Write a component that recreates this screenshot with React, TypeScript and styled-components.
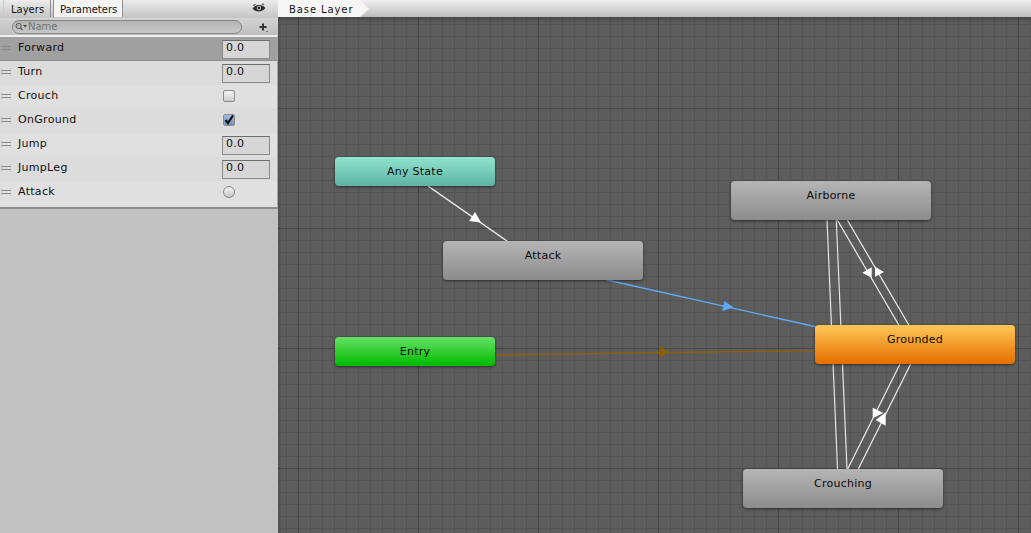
import React from "react";
import styled, { createGlobalStyle } from "styled-components";

const Global = createGlobalStyle`
  html, body { margin: 0; padding: 0; height: 100%; overflow: hidden; background: #c2c2c2; }
  #root { height: 100%; }
  * { box-sizing: border-box; }
`;

const Page = styled.div`
  display: flex;
  width: 1031px;
  height: 533px;
  font-family: "DejaVu Sans", sans-serif;
  font-size: 11px;
  color: #111;
`;

const Sidebar = styled.aside`
  width: 278px;
  flex: none;
  background: #c2c2c2;
  display: flex;
  flex-direction: column;
`;

const TabBar = styled.div`
  height: 18px;
  display: flex;
  align-items: stretch;
  padding-left: 3px;
  background: linear-gradient(#ececec, #c4c4c4);
  position: relative;
`;

const Tab = styled.div<{ $active?: boolean }>`
  width: ${(p) => (p.$active ? "70px" : "48px")};
  padding: 4px 0 0 ${(p) => (p.$active ? "6px" : "7px")};
  height: 17px;
  font-size: 10px;
  line-height: 12px;
  margin-right: ${(p) => (p.$active ? "0" : "2px")};
  border-left: 1px solid ${(p) => (p.$active ? "#8e8e8e" : "#c8c8c8")};
  border-right: 1px solid #8e8e8e;
  background: ${(p) => (p.$active ? "#f4f4f4" : "transparent")};
`;

const EyeSlot = styled.div`
  position: absolute;
  left: 252px;
  top: 3px;
  width: 14px;
  height: 11px;
  display: flex;
`;

const Toolbar = styled.div`
  height: 17px;
  display: flex;
  align-items: center;
  padding: 0 8px 0 12px;
  gap: 16px;
  background: linear-gradient(#d4d4d4, #bebebe);
`;

const SearchField = styled.div`
  width: 230px;
  height: 14px;
  border: 1px solid #858585;
  border-radius: 7px;
  display: flex;
  align-items: center;
  padding-left: 2px;
  background: linear-gradient(#b4b4b4, #c8c8c8);
  color: #707070;
  font-size: 10px;
`;

const PlusButton = styled.div`
  width: 10px;
  height: 10px;
  display: flex;
`;

const List = styled.div`
  border-top: 2px solid #efefef;
  border-bottom: 2px solid #8c8c8c;
  border-right: 1px solid #a8a8a8;
  padding-bottom: 2px;
  background: #e0e0e0;
  display: flex;
  flex-direction: column;
`;

const Row = styled.div<{ $tone: string; $selected?: boolean }>`
  height: 24px;
  display: flex;
  align-items: center;
  background: ${(p) => p.$tone};
  box-shadow: ${(p) => (p.$selected ? "inset 0 -1px 0 #8f8f8f" : "none")};
`;

const Handle = styled.div`
  width: 10px;
  margin-left: 1px;
  margin-bottom: 3px;
  height: 4px;
  flex: none;
  border-top: 1px solid #8a8a8a;
  border-bottom: 1px solid #8a8a8a;
`;

const RowName = styled.div`
  margin-left: 7px;
  width: 204px;
  flex: none;
  padding-bottom: 4px;
  letter-spacing: 0.3px;
`;

const NumberField = styled.div`
  width: 48px;
  height: 19px;
  padding-left: 3px;
  line-height: 13px;
  border: 1px solid #8b8b8b;
  border-top-color: #6f6f6f;
  background: #d6d6d6;
  letter-spacing: 0.2px;
`;

const CheckBox = styled.div<{ $checked?: boolean }>`
  width: 12px;
  height: 12px;
  margin-left: 1px;
  margin-bottom: 2px;
  border: 1px solid #8a8a8a;
  border-radius: 2px;
  background: ${(p) => (p.$checked ? "linear-gradient(#a3bddf, #6f92c3)" : "linear-gradient(#f4f4f4, #cdcdcd)")};
  display: flex;
`;

const RadioBall = styled.div`
  width: 12px;
  height: 12px;
  margin-left: 1px;
  margin-bottom: 2px;
  border: 1px solid #858585;
  border-radius: 50%;
  background: linear-gradient(#f7f7f7, #c6c6c6);
`;

const Main = styled.main`
  flex: 1;
  display: flex;
  flex-direction: column;
  min-width: 0;
`;

const Breadcrumb = styled.div`
  height: 17px;
  flex: none;
  background: linear-gradient(#f0f0f0, #bdbdbd);
`;

const Crumb = styled.div`
  width: 91px;
  height: 17px;
  padding: 3px 0 0 11px;
  line-height: 13px;
  font-size: 10px;
  letter-spacing: 0.9px;
  background: #f6f6f6;
  clip-path: polygon(0 0, 82px 0, 91px 9px, 82px 17px, 0 17px);
`;

const Canvas = styled.div`
  flex: 1;
  position: relative;
  overflow: hidden;
  background-color: #5d5d5d;
  background-image:
    linear-gradient(to right, #454545 1px, transparent 1px),
    linear-gradient(to bottom, #454545 1px, transparent 1px),
    linear-gradient(to right, #545454 1px, transparent 1px),
    linear-gradient(to bottom, #545454 1px, transparent 1px);
  background-size: 120px 120px, 120px 120px, 12px 12px, 12px 12px;
  background-position: 20px 91px, 20px 91px, 8px 7px, 8px 7px;
  &::after {
    content: "";
    position: absolute;
    inset: 0;
    pointer-events: none;
    box-shadow: inset 3px 5px 5px -3px rgba(0, 0, 0, 0.28);
  }
`;

const Edges = styled.svg`
  position: absolute;
  left: 0;
  top: 0;
`;

const tones = {
  gray: ["#b5b5b5", "#8c8c8c"],
  teal: ["#90e4ce", "#5eb3a3"],
  green: ["#66e266", "#00b900"],
  orange: ["#ffc857", "#e56e00"],
} as const;

const Node = styled.div<{ $x: number; $y: number; $w: number; $h: number; $tone: keyof typeof tones }>`
  position: absolute;
  left: ${(p) => p.$x}px;
  top: ${(p) => p.$y}px;
  width: ${(p) => p.$w}px;
  height: ${(p) => p.$h}px;
  padding-top: 8px;
  border-radius: 4px;
  text-align: center;
  line-height: 14px;
  letter-spacing: 0.25px;
  color: #0c0c0c;
  background: linear-gradient(${(p) => tones[p.$tone][0]}, ${(p) => tones[p.$tone][1]});
  box-shadow: 0 1px 3px rgba(0, 0, 0, 0.55);
`;

const OX = 278;
const OY = 17;

type Seg = [number, number, number, number];

const under: { c: string; w: number; s: Seg }[] = [
  { c: "#e4e4e4", w: 1.2, s: [827, 220, 837.5, 469] },
  { c: "#e4e4e4", w: 1.2, s: [836.3, 220, 847, 469] },
  { c: "#f0f0f0", w: 1.2, s: [837.3, 220, 900, 327] },
  { c: "#f0f0f0", w: 1.2, s: [847.3, 220, 910, 327] },
  { c: "#f0f0f0", w: 1.2, s: [900, 364, 847.7, 469] },
  { c: "#f0f0f0", w: 1.2, s: [910.7, 364, 858.3, 469] },
  { c: "#f4f4f4", w: 1.5, s: [428, 186, 507, 241] },
  { c: "#5fa8f5", w: 1.4, s: [607, 280, 817, 327] },
  { c: "#8b5e0a", w: 1.5, s: [495, 355, 817, 350.5] },
];

const heads: { c: string; p: number[] }[] = [
  { c: "#ffffff", p: [475, 212, 469, 221, 481, 222.5] },
  { c: "#5fa8f5", p: [724.5, 301, 722, 311, 733.5, 307.5] },
  { c: "#8b5e0a", p: [660, 347, 660, 357, 670, 352] },
  { c: "#ffffff", p: [862.3, 272.7, 871.7, 267.3, 871.7, 277.7] },
  { c: "#ffffff", p: [884, 272, 875, 266.7, 875, 276.7] },
  { c: "#ffffff", p: [872.7, 407.7, 872.7, 418.3, 883.3, 413] },
  { c: "#ffffff", p: [885.7, 412.3, 885.7, 425.7, 875.7, 420] },
];

const params = [
  { name: "Forward", kind: "float", tone: "#a0a0a0" },
  { name: "Turn", kind: "float", tone: "#dcdcdc" },
  { name: "Crouch", kind: "off", tone: "#e0e0e0" },
  { name: "OnGround", kind: "on", tone: "#dcdcdc" },
  { name: "Jump", kind: "float", tone: "#e0e0e0" },
  { name: "JumpLeg", kind: "float", tone: "#dcdcdc" },
  { name: "Attack", kind: "trigger", tone: "#e0e0e0" },
];

const nodes = [
  { label: "Any State", x: 335, y: 157, w: 160, h: 29, tone: "teal" },
  { label: "Attack", x: 443, y: 241, w: 200, h: 39, tone: "gray" },
  { label: "Airborne", x: 731, y: 181, w: 200, h: 39, tone: "gray" },
  { label: "Grounded", x: 815, y: 325, w: 200, h: 39, tone: "orange" },
  { label: "Crouching", x: 743, y: 469, w: 200, h: 39, tone: "gray" },
  { label: "Entry", x: 335, y: 337, w: 160, h: 29, tone: "green" },
] as const;

export default function App() {
  return (
    <Page>
      <Global />
      <Sidebar>
        <TabBar>
          <Tab>Layers</Tab>
          <Tab $active>Parameters</Tab>
          <EyeSlot>
            <svg width="14" height="11" viewBox="0 0 14 11">
              <path d="M0.5 5.5 C3 1.5 10 0.5 13.5 5 C10 9.5 3.5 9.5 0.5 5.5Z" fill="#2a2a2a" />
              <path d="M1 2.5 L3.5 1.5 M12 1.5 L10 1" stroke="#333" strokeWidth="1" />
              <circle cx="7" cy="5" r="2.2" fill="#c9c9c9" />
              <circle cx="7" cy="5" r="1.2" fill="#111" />
            </svg>
          </EyeSlot>
        </TabBar>
        <Toolbar>
          <SearchField>
            <svg width="13" height="10" viewBox="0 0 13 10">
              <circle cx="3.6" cy="4" r="2.6" fill="none" stroke="#555" strokeWidth="1" />
              <path d="M5.5 6 L7.5 8" stroke="#555" strokeWidth="1.2" />
              <path d="M8 3 H12 L10 5.5Z" fill="#444" />
            </svg>
            Name
          </SearchField>
          <PlusButton>
            <svg width="10" height="10" viewBox="0 0 10 10">
              <path d="M4 1.5 H6 V4 H8.5 V6 H6 V8.5 H4 V6 H1.5 V4 H4Z" fill="#333" />
              <path d="M8 9.5 H10" stroke="#777" strokeWidth="1" />
            </svg>
          </PlusButton>
        </Toolbar>
        <List>
          {params.map((p, i) => (
            <Row key={p.name} $tone={p.tone} $selected={i === 0}>
              <Handle />
              <RowName>{p.name}</RowName>
              {p.kind === "float" && <NumberField>0.0</NumberField>}
              {p.kind === "off" && <CheckBox />}
              {p.kind === "on" && (
                <CheckBox $checked>
                  <svg width="10" height="10" viewBox="0 0 10 10">
                    <path d="M1.5 5 L4 8 L9 0.5" fill="none" stroke="#0a0a0a" strokeWidth="2" />
                  </svg>
                </CheckBox>
              )}
              {p.kind === "trigger" && <RadioBall />}
            </Row>
          ))}
        </List>
      </Sidebar>
      <Main>
        <Breadcrumb>
          <Crumb>Base Layer</Crumb>
        </Breadcrumb>
        <Canvas>
          <Edges width="753" height="516" viewBox={`${OX} ${OY} 753 516`}>
            {under.map((e, i) => (
              <line key={i} x1={e.s[0]} y1={e.s[1]} x2={e.s[2]} y2={e.s[3]} stroke={e.c} strokeWidth={e.w} />
            ))}
            {heads.map((h, i) => (
              <polygon key={i} points={h.p.join(" ")} fill={h.c} />
            ))}
          </Edges>
          {nodes.map((n) => (
            <Node key={n.label} $x={n.x - OX} $y={n.y - OY} $w={n.w} $h={n.h} $tone={n.tone}>
              {n.label}
            </Node>
          ))}
        </Canvas>
      </Main>
    </Page>
  );
}
